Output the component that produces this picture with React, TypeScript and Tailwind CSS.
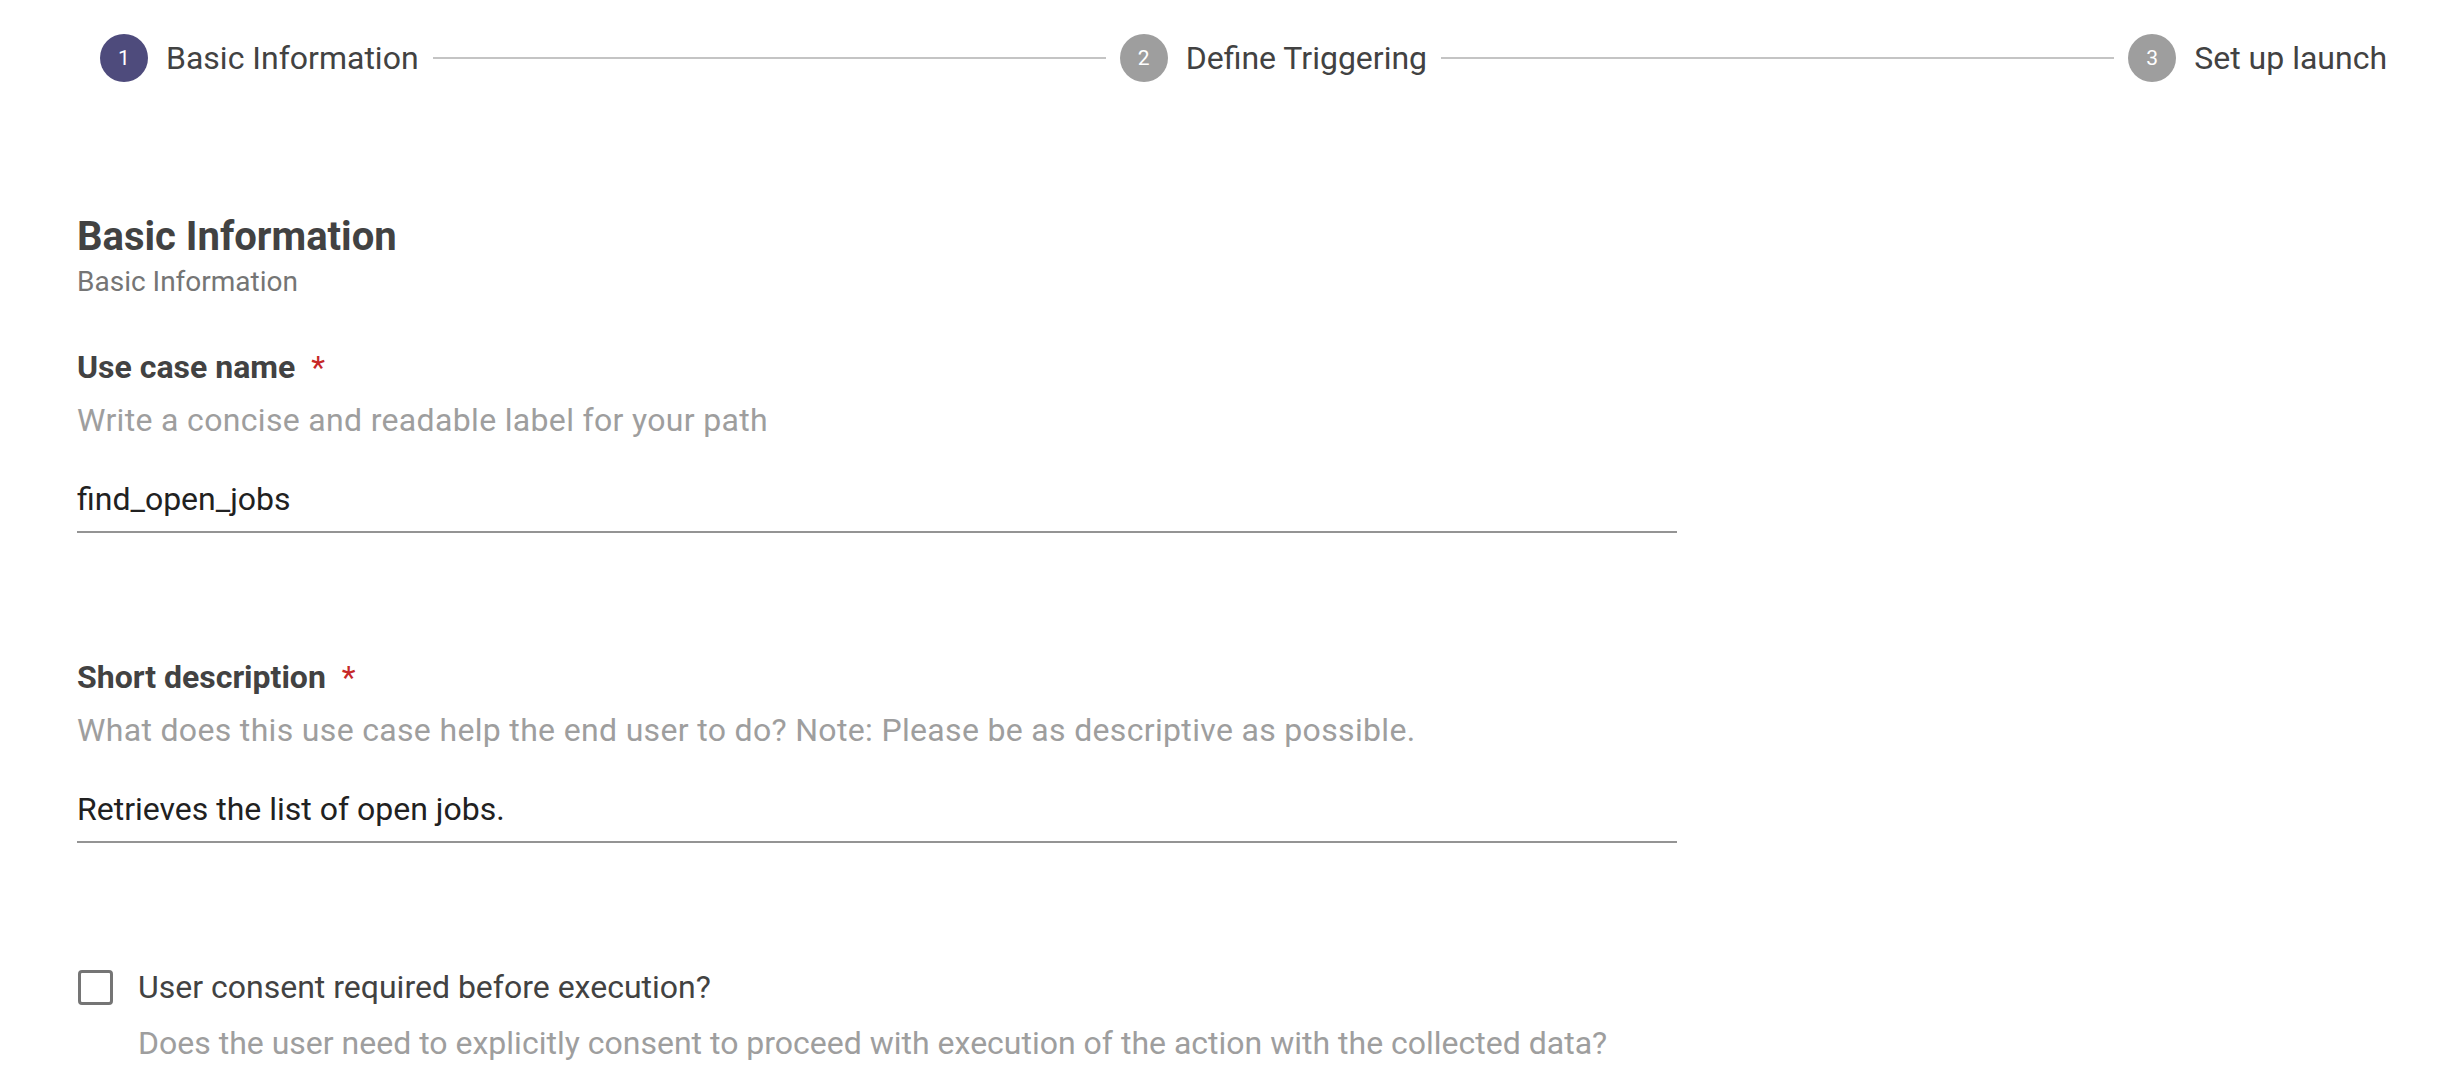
import React from "react";

function Step({ n, label, active }: { n: number; label: string; active?: boolean }) {
  return (
    <div className="flex items-center shrink-0">
      <div
        className={
          "w-[48px] h-[48px] rounded-full flex items-center justify-center text-white text-[21px] leading-none " +
          (active ? "bg-[#4e4b7c]" : "bg-[#9e9e9e]")
        }
      >
        {n}
      </div>
      <div className="ml-[18px] text-[32px] leading-[40px] text-[#424242]">{label}</div>
    </div>
  );
}

function Line() {
  return <div className="flex-1 h-[2px] bg-[#c4c4c4] mx-[14px]" />;
}

function Field({ label, helper, value }: { label: string; helper: string; value: string }) {
  return (
    <div className="flex flex-col">
      <div className="text-[32px] leading-[40px] font-bold text-[#424242]">
        {label}
        <span className="text-[#c62828] font-normal ml-[16px]">*</span>
      </div>
      <div className="mt-[13px] text-[32px] tracking-[0.33px] leading-[40px] text-[#9e9e9e]">{helper}</div>
      <div className="mt-[39px] w-[1600px] border-b-2 border-[#949494] pb-[12px] text-[32px] leading-[40px] text-[#212121]">
        {value}
      </div>
    </div>
  );
}

export default function App() {
  return (
    <div className="w-[2454px] h-[1088px] bg-white overflow-hidden" style={{ fontFamily: "Roboto, 'Noto Sans', sans-serif" }}>
      <div className="flex items-center pl-[100px] pr-[67px] pt-[34px]">
        <Step n={1} label="Basic Information" active />
        <Line />
        <Step n={2} label="Define Triggering" />
        <Line />
        <Step n={3} label="Set up launch" />
      </div>
      <div className="pl-[77px] pt-[131px] flex flex-col">
        <div className="text-[40px] leading-[48px] font-bold text-[#424242]">Basic Information</div>
        <div className="mt-[3px] text-[28px] leading-[36px] text-[#757575]">Basic Information</div>
        <div className="mt-[47px]">
          <Field
            label="Use case name"
            helper="Write a concise and readable label for your path"
            value="find_open_jobs"
          />
        </div>
        <div className="mt-[124px]">
          <Field
            label="Short description"
            helper="What does this use case help the end user to do? Note: Please be as descriptive as possible."
            value="Retrieves the list of open jobs."
          />
        </div>
        <div className="mt-[124px] flex flex-col">
          <div className="flex items-center">
            <div className="w-[35px] h-[35px] border-[3px] border-[#757575] rounded-[4px] ml-[1px]" />
            <div className="ml-[25px] text-[32px] leading-[40px] text-[#424242]">User consent required before execution?</div>
          </div>
          <div className="mt-[16px] ml-[61px] text-[32px] leading-[40px] text-[#9e9e9e]">
            Does the user need to explicitly consent to proceed with execution of the action with the collected data?
          </div>
        </div>
      </div>
    </div>
  );
}
